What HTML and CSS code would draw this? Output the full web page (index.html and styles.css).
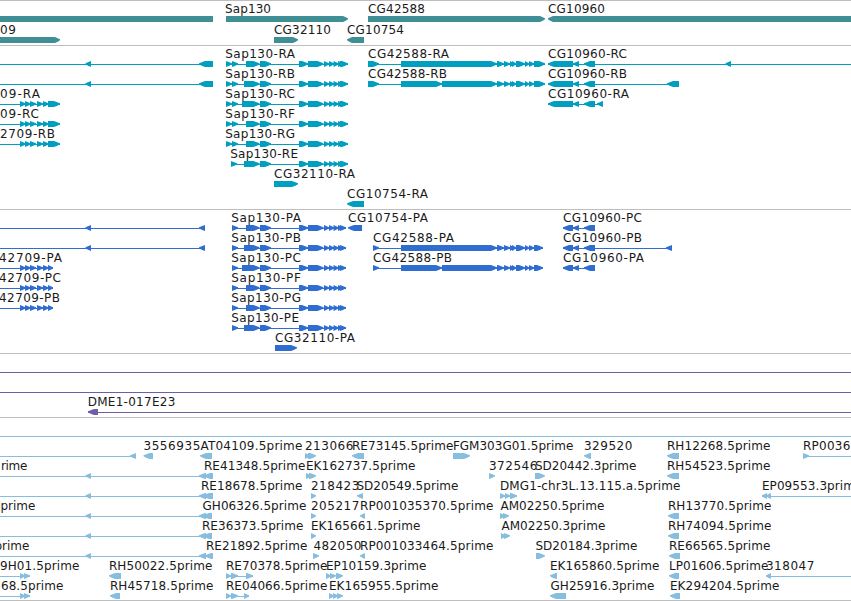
FILE: index.html
```html
<!DOCTYPE html>
<html lang="en">
<head>
    <meta charset="UTF-8">
    <title>Genome Browser</title>
    <link rel="stylesheet" href="styles.css">
</head>
<body>
    <main class="browser" id="browser"></main>
    <script src="tracks.js"></script>
</body>
</html>
```
FILE: styles.css
```css
body {
    margin: 0;
    background-color: #fff;
    overflow: hidden;
}
.browser {
    display: flex;
    flex-direction: column;
    width: 851px;
    border-bottom: 1px solid #bebebe;
}
.track {
    border-top: 1px solid #bebebe;
}
.track svg {
    display: block;
    width: 100%;
    height: 100%;
}
.genes { height: 44px; color: #408e96; }
.mrna { height: 163px; color: #009ebf; }
.protein { height: 143px; color: #306dd0; }
.bac { height: 63px; color: #735ca6; }
.est { height: 182px; color: #87bedf; }
.line {
    fill: currentColor;
    shape-rendering: crispEdges;
}
.feature {
    fill: currentColor;
}
.label {
    font-family: "DejaVu Sans", sans-serif;
    font-size: 12px;
    fill: #1a1a1a;
}
```
FILE: tracks.js
```js
// labels: [text, start, end]   lines / fwd / rev: [start, end]
const sapTail = [[260, 271], [299, 308], [308, 323.5], [324, 329], [329, 334], [333.5, 338.5], [338, 343]];
function sap(name, start, exon, end, extra) {
    const first = extra ? [[226, 232], [232, 238]] : [[start, start + 6]];
    return {
        labels: [[name, start - 0.8, name.endsWith("E") ? start + 67 : start + 69]],
        lines: [[start, end]],
        fwd: [...first, [exon, 259.5], ...sapTail, [340, end]]
    };
}

function cg42588(name, start, firstEnd, end, split) {
    return {
        labels: [[name, start, start + (name.endsWith("A") ? 81 : 79)]],
        lines: [[start, end]],
        fwd: [[start, firstEnd], ...(split ? [[401, 442], [442, 497]] : [[401, 497]]),
            [497, 504], [504, 510], [510, 514], [512, 516], [516, 525], [525, 529], [529, 534], [534, end]]
    };
}

function cg10960(name, start, end, last) {
    return {
        labels: [[name, start, start + (name.endsWith("A") ? 81 : 79)]],
        lines: [[start, end]],
        rev: [[start, 573], [573, 579], [584, 595], ...last]
    };
}

function leftRev(end, last) {
    return { lines: [[0, end]], rev: [[85.5, 91], ...last] };
}

function leftFwd(name, start, textEnd, end) {
    return {
        labels: [[name, start, textEnd]],
        lines: [[0, end]],
        fwd: [[20, 25.5], [25, 30.5], [30, 36], [37, 43], [43, 48.5], [48, end]]
    };
}

const one = (dir, name, x, textEnd, a, b) => ({ labels: [[name, x, textEnd]], [dir]: [[a, b]] });

const tracks = [
    { name: "genes", pitch: 21, head: 5, rows: [
        [{ rev: [[-10, 213]] },
            one("fwd", "Sap130", 225, 271, 226, 348),
            one("fwd", "CG42588", 368, 425, 368, 545),
            one("rev", "CG10960", 548, 605, 548, 861)],
        [one("fwd", "09", 0, 16, -10, 60),
            one("fwd", "CG32110", 274, 331, 274, 298),
            one("rev", "CG10754", 347, 404, 347, 364)]
    ] },
    { name: "mrna", pitch: 20, rows: [
        [leftRev(213, [[199, 213]]), sap("Sap130-RA", 226, 246, 348, true),
            cg42588("CG42588-RA", 368, 379, 545), cg10960("CG10960-RC", 548, 851, [[725.5, 731]])],
        [leftRev(213, [[199, 213]]), sap("Sap130-RB", 226, 244, 348, true),
            cg42588("CG42588-RB", 368, 379, 545, true), cg10960("CG10960-RB", 548, 679, [[667, 679]])],
        [leftFwd("09-RA", 0, 40, 60), sap("Sap130-RC", 226, 242, 348, true),
            cg10960("CG10960-RA", 548, 603, [[597, 603]])],
        [leftFwd("09-RC", 0, 39, 60), sap("Sap130-RF", 226, 246, 348, true)],
        [leftFwd("2709-RB", 0, 55, 60), sap("Sap130-RG", 226, 246, 348, true)],
        [sap("Sap130-RE", 231, 244, 348)],
        [one("fwd", "CG32110-RA", 274, 355, 274, 298)],
        [one("rev", "CG10754-RA", 347, 428, 347, 364)]
    ] },
    { name: "protein", pitch: 20, rows: [
        [leftRev(205, [[199, 205]]), sap("Sap130-PA", 232, 246, 346),
            one("rev", "CG10754-PA", 348, 428, 348, 362), cg10960("CG10960-PC", 563, 595, [])],
        [leftRev(205, [[199, 205]]), sap("Sap130-PB", 232, 244, 346),
            cg42588("CG42588-PA", 373, 379, 543), cg10960("CG10960-PB", 563, 672, [[666, 672]])],
        [leftFwd("42709-PA", -1, 62, 53), sap("Sap130-PC", 232, 242, 346),
            cg42588("CG42588-PB", 373, 379, 543, true), cg10960("CG10960-PA", 563, 595, [])],
        [leftFwd("42709-PC", -1, 61, 53), sap("Sap130-PF", 232, 246, 346)],
        [leftFwd("42709-PB", -1, 60, 53), sap("Sap130-PG", 232, 246, 346)],
        [sap("Sap130-PE", 232, 244, 346)],
        [one("fwd", "CG32110-PA", 275, 355, 275, 297)]
    ] },
    { name: "bac", pitch: 20, rows: [
        [{ lines: [[0, 851]] }],
        [{ lines: [[0, 851]] }],
        [{ labels: [["DME1-017E23", 87.7, 175.3]], lines: [[88, 851]], rev: [[88, 98]] }]
    ] },
    { name: "est", pitch: 20, shift: 0.4, rows: [
        [{ lines: [[0, 851]] }],
        [{ lines: [[0, 136]], rev: [[130, 136]] },
            one("rev", "3556935", 143, 200, 143.5, 153),
            one("rev", "AT04109.5prime", 200, 302, 200, 212),
            { labels: [["213066", 304.5, 353]], fwd: [[305, 310], [308, 316]] },
            one("rev", "RE73145.5prime", 351.5, 453, 352, 364),
            one("fwd", "FGM303G01.5prime", 452.5, 573, 453, 470),
            one("rev", "329520", 583.5, 632, 584, 591),
            one("rev", "RH12268.5prime", 666.5, 770, 667, 679),
            { labels: [["RP0036", 802.5, 850]], lines: [[803, 851]], fwd: [[803, 809]] }],
        [leftRev(213, [[199, 206], [204, 213]]),
            { labels: [["rime", 0.5, 27], ["RE41348.5prime", 203.5, 305]] },
            { labels: [["EK162737.5prime", 305.5, 415]], fwd: [[306, 311], [309, 316]] },
            one("fwd", "372546", 488.5, 537, 489, 495),
            one("fwd", "SD20442.3prime", 534.5, 636, 535, 545),
            one("rev", "RH54523.5prime", 666.5, 770, 667, 679)],
        [leftRev(213, [[199, 206], [203, 213]]),
            { labels: [["RE18678.5prime", 200.5, 302]] },
            one("fwd", "218423", 310.5, 359, 311, 316),
            one("rev", "SD20549.5prime", 356, 458, 357, 363),
            { labels: [["DMG1-chr3L.13.115.a.5prime", 499.5, 680]], lines: [[500, 517]], fwd: [[500, 505], [505, 510], [510, 517]] },
            { labels: [["EP09553.3prime", 761.5, 862]], lines: [[762, 851]], rev: [[762, 767], [766, 771]] }],
        [leftRev(212, [[199, 206], [203, 212]]),
            { labels: [["prime", 0, 35], ["GH06326.5prime", 202, 306]] },
            one("fwd", "205217", 310.5, 359, 311, 316),
            one("rev", "RP001035370.5prime", 359.5, 493, 360, 365),
            { labels: [["AM02250.5prime", 500, 604]], fwd: [[500, 505], [503, 509]] },
            one("rev", "RH13770.5prime", 667.5, 771, 668, 679)],
        [leftRev(212, [[199, 206], [203, 212]]),
            { labels: [["RE36373.5prime", 201.5, 303]] },
            one("fwd", "EK165661.5prime", 310.5, 420, 311, 316),
            { labels: [["AM02250.3prime", 501, 605]], fwd: [[501, 506], [504, 510]] },
            one("rev", "RH74094.5prime", 667.5, 771, 668, 679)],
        [leftRev(213, [[199, 206], [205, 213]]),
            { labels: [["prime", -6, 29], ["RE21892.5prime", 205.5, 307]] },
            one("fwd", "482050", 313, 361, 313, 319),
            one("rev", "RP001033464.5prime", 359.5, 493, 360, 365),
            one("fwd", "SD20184.3prime", 535, 637, 536, 545),
            one("rev", "RE66565.5prime", 668.5, 770, 669, 680)],
        [{ labels: [["9H01.5prime", -0.5, 79]], lines: [[0, 30]], fwd: [[20, 25], [24, 30]] },
            one("rev", "RH50022.5prime", 108.5, 212, 109, 121),
            { labels: [["RE70378.5prime", 225.5, 327]], lines: [[226, 253]], fwd: [[226, 231], [231, 238], [246, 253]] },
            { labels: [["EP10159.3prime", 325.5, 426]], fwd: [[326, 331], [330, 336], [336, 343]] },
            one("rev", "EK165860.5prime", 549.5, 659, 550, 557),
            one("rev", "LP01606.5prime", 668.5, 768, 669, 679),
            { labels: [["318047", 765.5, 814]], lines: [[766, 851]], rev: [[766, 771]] }],
        [{ labels: [["68.5prime", 0.5, 63]], lines: [[0, 30]], fwd: [[20, 25], [24, 30]] },
            one("rev", "RH45718.5prime", 109.5, 213, 110, 120),
            { labels: [["RE04066.5prime", 225.5, 327]], lines: [[226, 249]], fwd: [[226, 231], [231, 238], [244, 249]] },
            { labels: [["EK165955.5prime", 328.5, 438]], fwd: [[329, 334], [333, 338], [337, 343]] },
            one("rev", "GH25916.3prime", 550, 654, 550, 566),
            one("rev", "EK294204.5prime", 669.5, 779, 670, 680)]
    ] }
];

// the head tapers in two steps so short exons stay readable
function arrow(from, to, y, head, forward) {
    const h = Math.min(head, to - from);
    const tip = forward ? to : from;
    const back = forward ? from : to;
    const d = forward ? -1 : 1;
    const neck = tip + d * h;
    const mid = tip + d * h * 0.45;
    return `<polygon class="feature" points="${back},${y} ${neck},${y} ${mid},${y + 1.2} ${tip},${y + 2.3} ${tip},${y + 3.3} ${mid},${y + 4.7} ${neck},${y + 6} ${back},${y + 6}"/>`;
}

document.getElementById("browser").innerHTML = tracks.map(track => {
    let shapes = "";
    let texts = "";
    track.rows.forEach((row, i) => {
        const y = 15 + i * track.pitch;
        row.forEach(({ labels = [], lines = [], fwd = [], rev = [] }) => {
            lines.forEach(([a, b]) => shapes += `<rect class="line" x="${a}" y="${y + 3}" width="${b - a}" height="1"/>`);
            fwd.forEach(([a, b]) => shapes += arrow(a, b, y, track.head || 6, true));
            rev.forEach(([a, b]) => shapes += arrow(a, b, y, track.head || 6, false));
            labels.forEach(([text, a, b]) => texts += `<text class="label" x="${a + (track.shift || 0)}" y="${y - 3}" textLength="${b - a}">${text}</text>`);
        });
    });
    return `<section class="track ${track.name}"><svg>${shapes}${texts}</svg></section>`;
}).join("");
```
